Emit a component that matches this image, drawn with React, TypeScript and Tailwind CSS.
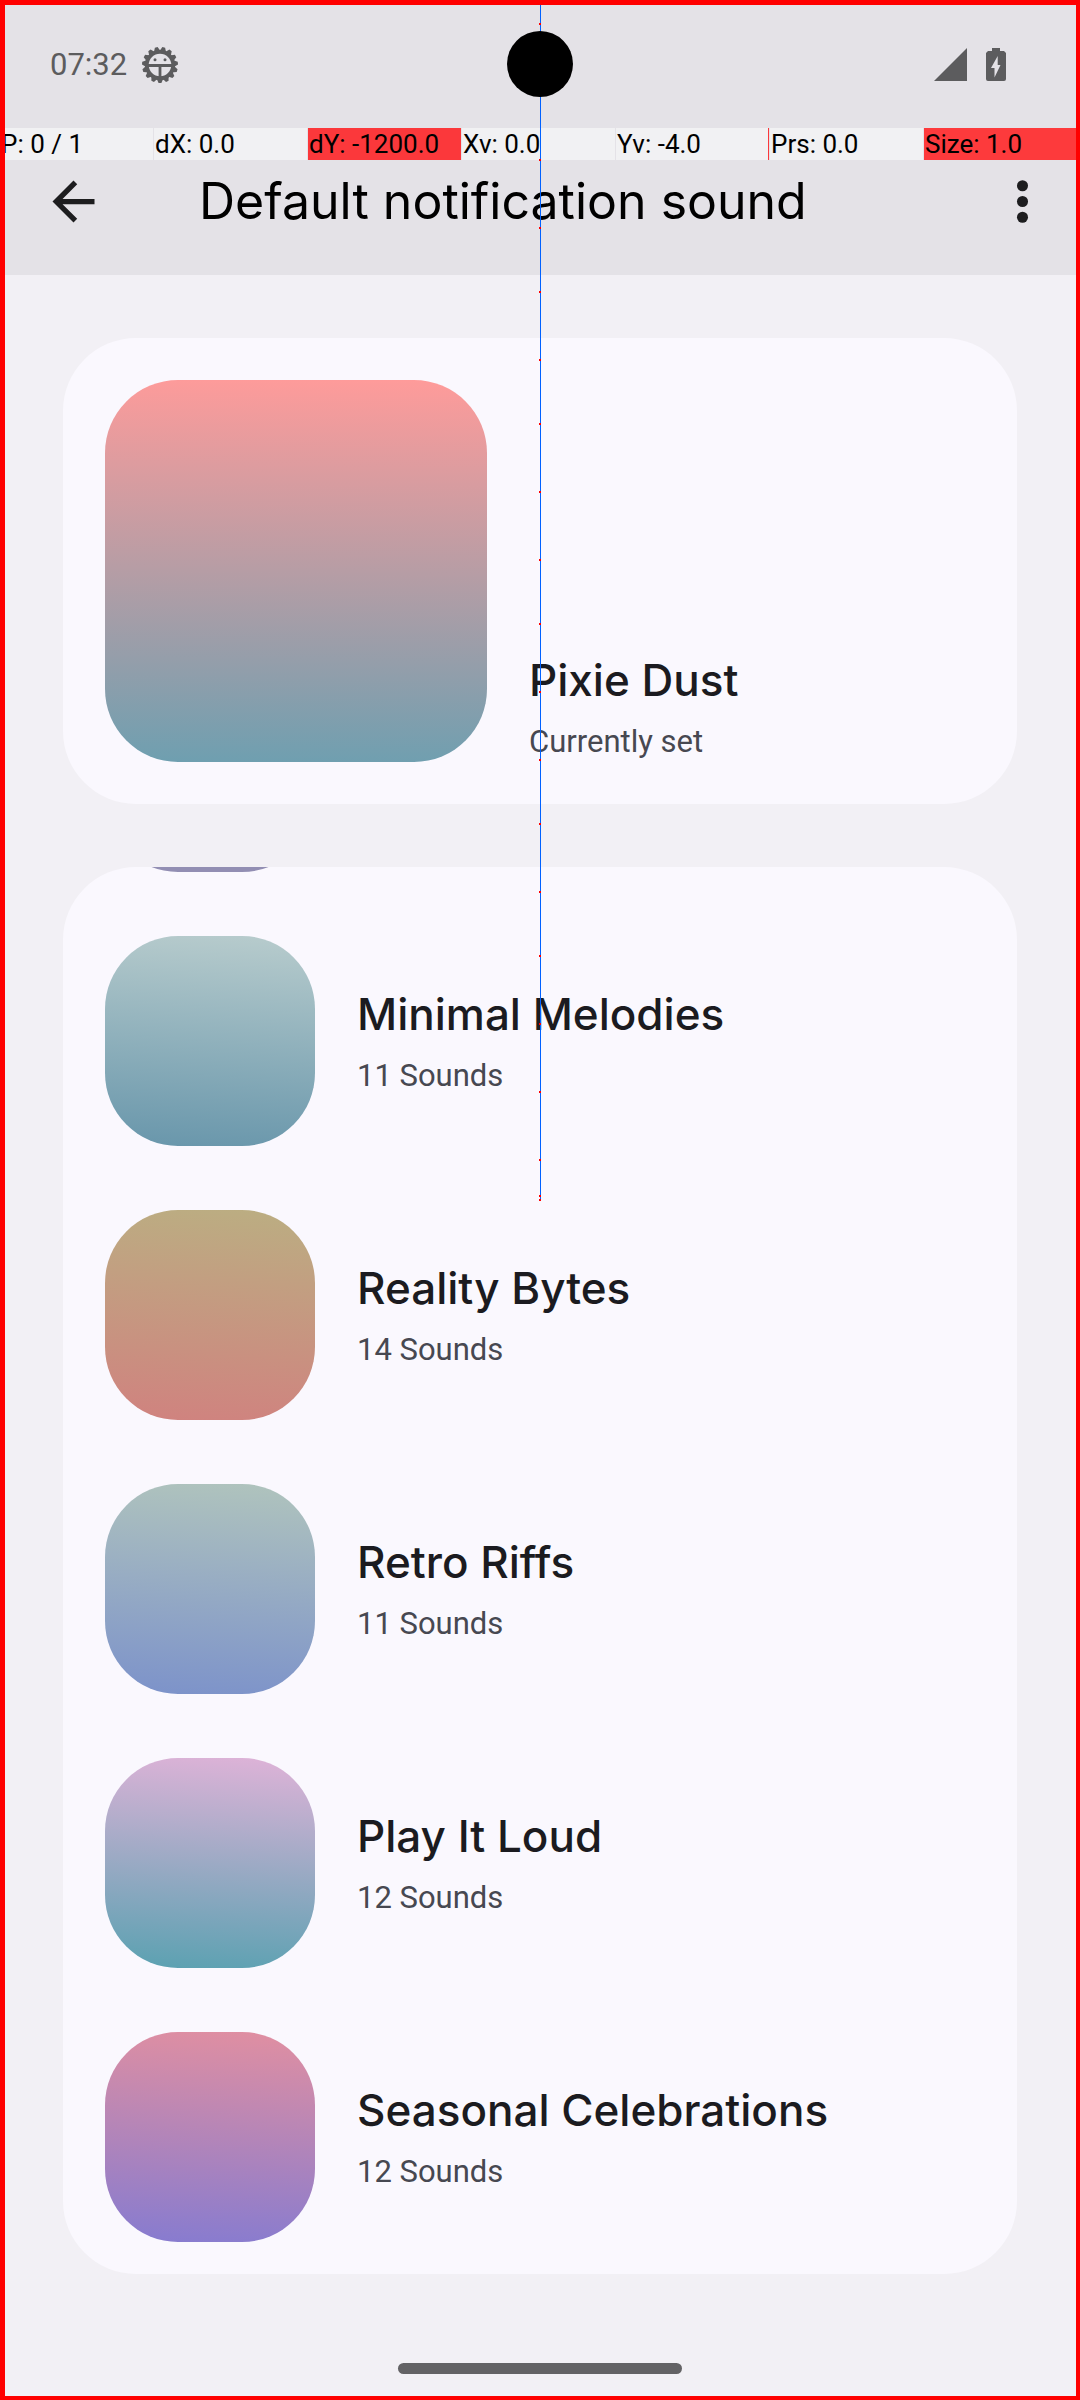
type SoundPack = { name: string; detail: string; art: string };

const packs: SoundPack[] = [
  { name: "Minimal Melodies", detail: "11 Sounds", art: "bg-[linear-gradient(184deg,#b8cccd,#6896ab)]" },
  { name: "Reality Bytes", detail: "14 Sounds", art: "bg-[linear-gradient(184deg,#bbae82,#d0827f)]" },
  { name: "Retro Riffs", detail: "11 Sounds", art: "bg-[linear-gradient(184deg,#b0c4bd,#7c92ca)]" },
  { name: "Play It Loud", detail: "12 Sounds", art: "bg-[linear-gradient(184deg,#dfb3d8,#5aa1b1)]" },
  { name: "Seasonal Celebrations", detail: "12 Sounds", art: "bg-[linear-gradient(184deg,#e18fa1,#867bd0)]" },
];

const pointerReadout = [
  { label: "P: 0 / 1", tone: "bg-[#f1f1f3] pl-px" },
  { label: "dX: 0.0", tone: "bg-[#f1f1f3] pl-px" },
  { label: "dY: -1200.0", tone: "bg-[#fb383b] pl-px" },
  { label: "Xv: 0.0", tone: "bg-[#f1f1f3] pl-px" },
  { label: "Yv: -4.0", tone: "bg-[#f1f1f3] pl-px border-r border-[#fb383b]" },
  { label: "Prs: 0.0", tone: "bg-[#f1f1f3] pl-px" },
  { label: "Size: 1.0", tone: "bg-[#fd3a3c] pl-px" },
];

const trailPoints = [
  24, 92, 160, 228, 292, 360, 424, 492, 560, 624, 692, 760, 824, 892, 956, 1024, 1092, 1160, 1196, 1200,
];

// Fifteen teeth, the first one pointing straight down.
const teeth = Array.from({ length: 15 }, (_, i) => i * 24);

function DebugIcon() {
  return (
    <svg className="size-9" viewBox="0 0 36 36" fill="none" aria-hidden="true">
      {teeth.map((angle) => (
        <path key={angle} d="M14.4 31 L16.6 36 H19.4 L21.6 31 Z" fill="#5c5c5e" transform={`rotate(${angle} 18 18)`} />
      ))}
      <circle cx="18" cy="18" r="13.2" stroke="#5c5c5e" strokeWidth="3.8" />
      <path d="M6 18.5 H30 M18 18.5 V31" stroke="#5c5c5e" strokeWidth="2.8" />
      <circle cx="13" cy="12.8" r="1.5" fill="#5c5c5e" />
      <circle cx="23" cy="12.8" r="1.5" fill="#5c5c5e" />
    </svg>
  );
}

function StatusBar() {
  return (
    <div className="flex h-[122px] items-center justify-between pr-[74px] pb-0.5 pl-[50px] text-[#5c5c5e]">
      <div className="flex items-center gap-[15px]">
        <time className="text-[31px] leading-10">07:32</time>
        <DebugIcon />
      </div>
      <div className="flex items-center gap-[19px] pb-0.5">
        <svg className="h-[33px] w-[33px]" viewBox="0 0 33 33" aria-hidden="true">
          <path d="M0 33 L33 0 V33 Z" fill="#5c5c5e" />
        </svg>
        <svg className="h-[33px] w-5" viewBox="0 0 20 33" aria-hidden="true">
          <path
            fillRule="evenodd"
            fill="#5c5c5e"
            d="M6 0 H14 V3 H18 L20 5 V31 Q20 33 18 33 H2 Q0 33 0 31 V5 L2 3 H6 Z M11.700 8 L5 20 H8.500 V29.500 L14.500 17 H11.700 Z"
          />
        </svg>
      </div>
    </div>
  );
}

function PackText({ name, detail }: { name: string; detail: string }) {
  return (
    <span className="flex min-w-0 flex-col gap-3.5">
      <span className="font-[Inter,sans-serif] text-[44px] leading-[56px] font-medium text-[#1b1b20]">{name}</span>
      <span className="text-[31px] leading-10 text-[#474851]">{detail}</span>
    </span>
  );
}

function PointerTrail() {
  return (
    <svg
      className="pointer-events-none absolute top-0 left-1/2 h-[1202px] w-1 -translate-x-1/2"
      viewBox="0 0 4 1202"
      shapeRendering="crispEdges"
      aria-hidden="true"
    >
      <rect x="2" y="0" width="1" height="1200" fill="#0061ff" />
      {trailPoints.map((y) => (
        <rect key={y} x="1" y={y - 1} width="2" height="2" fill="#ff0000" />
      ))}
    </svg>
  );
}

export default function App() {
  return (
    <div className="relative flex min-h-screen flex-col bg-[#f2f0f5] font-[Roboto,sans-serif]">
      <header className="bg-[#e4e2e7] pt-[5px]">
        <StatusBar />
        <div className="flex h-[148px] items-center pr-[26px] pl-[42px]">
          <button type="button" aria-label="Navigate up">
            <svg className="size-[63px]" viewBox="0 0 24 24" fill="#1d1d1f" aria-hidden="true">
              <path d="M20 11H7.830l5.590-5.590L12 4l-8 8 8 8 1.410-1.410L7.830 13H20v-2z" />
            </svg>
          </button>
          <h1 className="ml-[94px] flex-1 font-[Inter,sans-serif] text-[50px] leading-[60px] text-black">
            Default notification sound
          </h1>
          <button type="button" aria-label="More options">
            <svg className="size-[63px]" viewBox="0 0 24 24" fill="#1d1d1f" aria-hidden="true">
              <circle cx="12" cy="6" r="2.1" />
              <circle cx="12" cy="12" r="2.1" />
              <circle cx="12" cy="18" r="2.1" />
            </svg>
          </button>
        </div>
      </header>

      <main className="flex flex-1 flex-col gap-[63px] px-[63px] pt-[63px] pb-[63px]">
        <button
          type="button"
          className="flex w-full items-end gap-[42px] rounded-[73px] bg-[#faf8fe] p-[42px] text-left"
        >
          <span className="size-[382px] shrink-0 rounded-[73px] bg-[linear-gradient(181deg,#ff9b9a,#6e9fb0)]" />
          <PackText name="Pixie Dust" detail="Currently set" />
        </button>

        <ul className="overflow-hidden rounded-[73px] bg-[#faf8fe]">
          <li className="flex h-[37px] items-end overflow-hidden px-[42px] pb-8">
            <span className="size-[210px] shrink-0 rounded-[73px] bg-[#928eb3]" />
          </li>
          {packs.map((pack) => (
            <li key={pack.name}>
              <button type="button" className="flex w-full items-center gap-[42px] px-[42px] py-8 text-left">
                <span className={`size-[210px] shrink-0 rounded-[73px] ${pack.art}`} />
                <PackText name={pack.name} detail={pack.detail} />
              </button>
            </li>
          ))}
        </ul>
      </main>

      <footer className="flex h-[63px] items-center justify-center">
        <div className="h-[11px] w-[284px] rounded-full bg-[#636265]" />
      </footer>

      <div className="pointer-events-none absolute inset-x-0 top-32 grid grid-cols-[repeat(6,153px)_1fr] gap-px text-[26px] leading-8 text-black">
        {pointerReadout.map((cell) => (
          <span key={cell.label} className={`overflow-hidden whitespace-nowrap ${cell.tone}`}>
            {cell.label}
          </span>
        ))}
      </div>
      <PointerTrail />
      <div className="absolute top-[31px] left-1/2 size-[66px] -translate-x-1/2 rounded-full bg-black" />
      <div className="pointer-events-none absolute inset-0 border-t-[5px] border-r-4 border-b-4 border-l-[5px] border-[#ff0000]" />
    </div>
  );
}
